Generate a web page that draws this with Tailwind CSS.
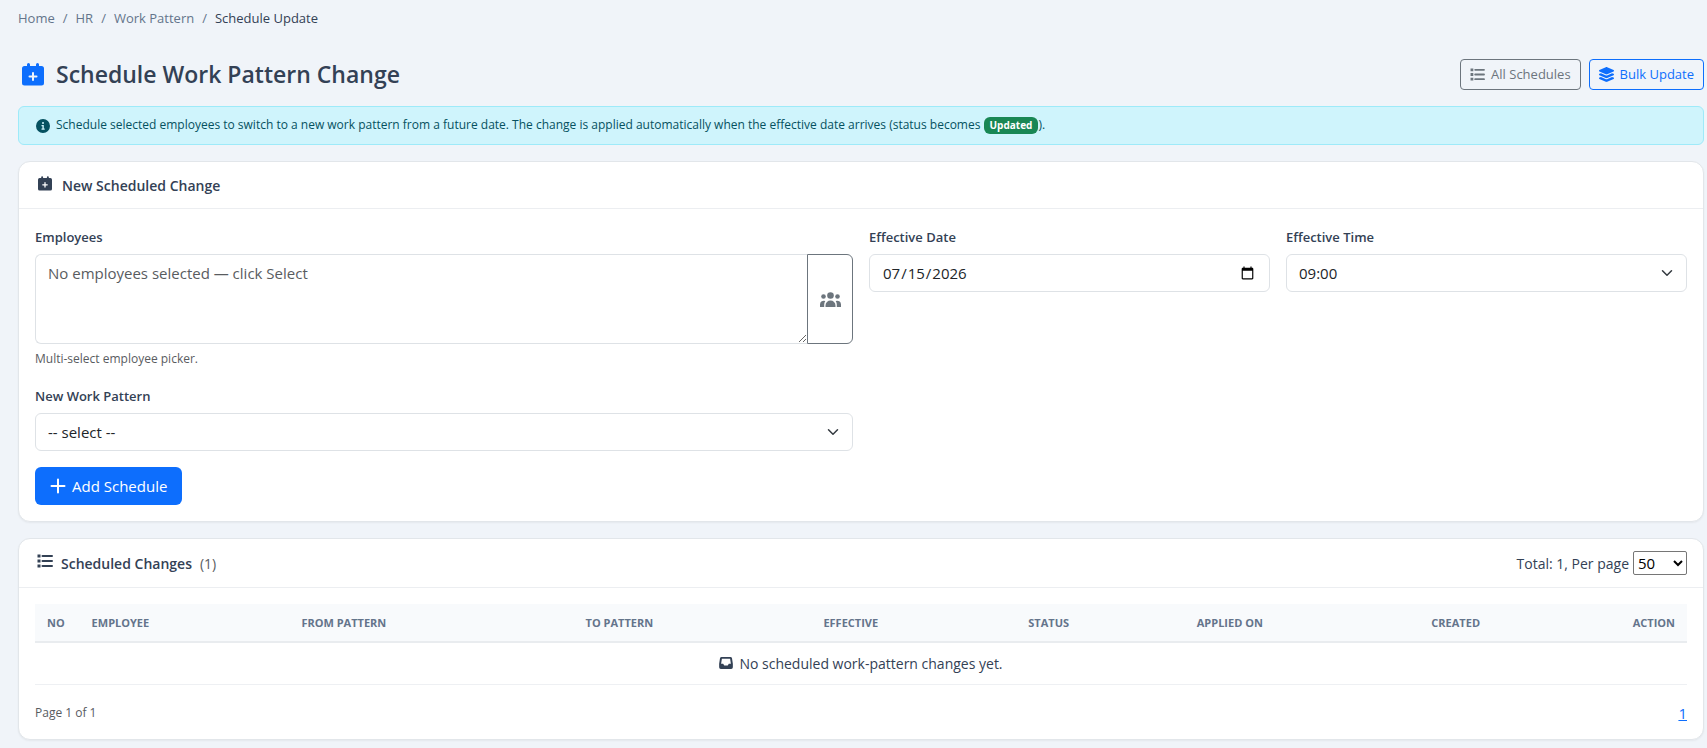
<!DOCTYPE html>
<html lang="en">
<head>
    <meta charset="UTF-8">
    <meta name="viewport" content="width=device-width, initial-scale=1.0">
    <title>Schedule Work Pattern Change</title>
    <script src="https://cdn.jsdelivr.net/npm/@tailwindcss/browser@4"></script>
</head>
<body class="bg-[#f0f4f9] font-['Segoe_UI','Open_Sans',sans-serif] text-[#334155]">
    <!-- Icon sprite -->
    <svg class="hidden" xmlns="http://www.w3.org/2000/svg">
        <symbol id="icon-calendar-plus" viewBox="0 0 22 23">
            <path fill="currentColor" fill-rule="evenodd" d="M6.5 0A1.5 1.5 0 0 1 8 1.5V3h6V1.5a1.5 1.5 0 0 1 3 0V3h2.5A2.5 2.5 0 0 1 22 5.5v14.5a2.5 2.5 0 0 1-2.5 2.5h-17A2.5 2.5 0 0 1 0 20V5.5A2.5 2.5 0 0 1 2.5 3H5V1.5A1.5 1.5 0 0 1 6.5 0zM11 9a1 1 0 0 0-1 1v2.5H7.5a1 1 0 0 0 0 2H10V17a1 1 0 0 0 2 0v-2.5h2.5a1 1 0 0 0 0-2H12V10a1 1 0 0 0-1-1z"/>
        </symbol>
        <symbol id="icon-list" viewBox="0 0 16 14">
            <path fill="currentColor" d="M.5.5h3v3h-3zM.5 5.5h3v3h-3zM.5 10.5h3v3h-3zM5.5 1H15a1 1 0 0 1 0 2H5.5a1 1 0 0 1 0-2zM5.5 6H15a1 1 0 0 1 0 2H5.5a1 1 0 0 1 0-2zM5.5 11H15a1 1 0 0 1 0 2H5.5a1 1 0 0 1 0-2z"/>
        </symbol>
        <symbol id="icon-layers" viewBox="32 0 512 512">
            <path fill="currentColor" d="M264.5 5.2c14.9-6.9 32.1-6.9 47 0l218.6 101c8.5 3.9 13.9 12.4 13.9 21.8s-5.4 17.9-13.9 21.8l-218.6 101c-14.9 6.9-32.1 6.9-47 0L45.9 149.8C37.4 145.8 32 137.3 32 128s5.4-17.9 13.9-21.8L264.5 5.2zM476.9 209.6l53.2 24.6c8.5 3.9 13.9 12.4 13.9 21.8s-5.4 17.9-13.9 21.8l-218.6 101c-14.9 6.9-32.1 6.9-47 0L45.9 277.8C37.4 273.8 32 265.3 32 256s5.4-17.9 13.9-21.8l53.2-24.6 152 70.2c23.4 10.8 50.4 10.8 73.8 0l152-70.2zm-152 198.2l152-70.2 53.2 24.6c8.5 3.9 13.9 12.4 13.9 21.8s-5.4 17.9-13.9 21.8l-218.6 101c-14.9 6.9-32.1 6.9-47 0L45.9 405.8C37.4 401.8 32 393.3 32 384s5.4-17.9 13.9-21.8l53.2-24.6 152 70.2c23.4 10.8 50.4 10.8 73.8 0z"/>
        </symbol>
        <symbol id="icon-info" viewBox="0 0 14 14">
            <path fill="currentColor" fill-rule="evenodd" d="M7 0a7 7 0 1 1 0 14A7 7 0 0 1 7 0zM7 3a1 1 0 1 0 0 2 1 1 0 0 0 0-2zM5.5 6v1.2h.9v2.3h-.9v1.2h3.2V9.5h-.9V6z"/>
        </symbol>
        <symbol id="icon-users" viewBox="0 0 21 15">
            <g fill="currentColor">
                <circle cx="10.5" cy="3.5" r="3.3"/>
                <circle cx="3.5" cy="4.5" r="2.3"/>
                <circle cx="17.5" cy="4.5" r="2.3"/>
                <path d="M5.5 15v-1.5a5 5 0 0 1 10 0V15zM0 15v-2.5A3.8 3.8 0 0 1 5.3 9 6.6 6.6 0 0 0 4.2 13v2zM21 15v-2.5A3.8 3.8 0 0 0 15.7 9a6.6 6.6 0 0 1 1.1 4v2z"/>
            </g>
        </symbol>
        <symbol id="icon-plus" viewBox="0 0 16 16">
            <path d="M8 1.5v13M1.5 8h13" fill="none" stroke="currentColor" stroke-width="2" stroke-linecap="round"/>
        </symbol>
        <symbol id="icon-inbox" viewBox="0 0 16 14">
            <path fill="currentColor" fill-rule="evenodd" d="M3 0h10a2 2 0 0 1 2 1.6L16 8v4a2 2 0 0 1-2 2H2a2 2 0 0 1-2-2V8l1-6.4A2 2 0 0 1 3 0zM3.2 2 2.3 8h2.4l1.3 2h4l1.3-2h2.4l-.9-6z"/>
        </symbol>
        <symbol id="icon-chevron" viewBox="0 0 16 16">
            <path d="m2 5 6 6 6-6" fill="none" stroke="currentColor" stroke-width="2" stroke-linecap="round" stroke-linejoin="round"/>
        </symbol>
    </svg>

    <main class="pl-[18px] pr-[3px] pt-2 pb-2">
        <!-- Breadcrumb -->
        <nav aria-label="Breadcrumb">
            <ol class="flex gap-2 text-[13px] leading-5 text-[#64748b]">
                <li><a href="#">Home</a></li>
                <li>/</li>
                <li><a href="#">HR</a></li>
                <li>/</li>
                <li><a href="#">Work Pattern</a></li>
                <li>/</li>
                <li class="text-[#334155]">Schedule Update</li>
            </ol>
        </nav>

        <!-- Page header -->
        <div class="flex items-center justify-between mt-[30px]">
            <h1 class="flex items-center gap-3 pl-1 text-[23px] leading-8 font-semibold">
                <svg class="w-[22px] h-[23px] text-[#0d6efd]"><use href="#icon-calendar-plus"/></svg>
                Schedule Work Pattern Change
            </h1>
            <div class="flex gap-2 text-[13px] leading-[21px]">
                <a href="#" class="flex items-center gap-1.5 rounded border border-[#6c757d] px-[9px] py-1 text-[#6c757d]">
                    <svg class="w-[15px] h-[13px]"><use href="#icon-list"/></svg>
                    All Schedules
                </a>
                <a href="#" class="flex items-center gap-1.5 rounded border border-[#0d6efd] px-[9px] py-1 text-[#0d6efd]">
                    <svg class="size-[15px]"><use href="#icon-layers"/></svg>
                    Bulk Update
                </a>
            </div>
        </div>

        <!-- Info alert -->
        <div class="flex items-center gap-1.5 mt-4 h-[39px] rounded-md border border-[#9eeaf9] bg-[#cff4fc] px-[17px] text-xs text-[#055160]">
            <svg class="size-[14px] shrink-0"><use href="#icon-info"/></svg>
            <p>Schedule selected employees to switch to a new work pattern from a future date. The change is applied automatically when the effective date arrives (status becomes <span class="inline-block rounded-md bg-[#198754] px-1.5 text-[10px] leading-[17px] font-bold text-white align-middle">Updated</span>).</p>
        </div>

        <!-- New scheduled change -->
        <section class="mt-4 rounded-xl border border-[#e2e6ea] bg-white shadow-xs">
            <h2 class="flex items-center gap-2.5 h-[47px] border-b border-[#eceef1] px-[19px] text-[14px] font-semibold">
                <svg class="w-[14px] h-[15px] mb-1"><use href="#icon-calendar-plus"/></svg>
                New Scheduled Change
            </h2>
            <form class="px-4 pt-[18px] pb-4">
                <div class="grid grid-cols-4 gap-4">
                    <div class="col-span-2">
                        <label for="employees" class="block mb-[7px] text-[13px] leading-5 font-semibold">Employees</label>
                        <div class="flex">
                            <textarea id="employees" readonly placeholder="No employees selected — click Select" class="block grow h-[90px] rounded-l-md border border-r-0 border-[#dee2e6] px-3 py-1.5 text-[15px] leading-6 placeholder:text-[#595c5f]"></textarea>
                            <button type="button" aria-label="Select employees" class="flex w-[46px] items-center justify-center rounded-r-md border border-[#6c757d] text-[#6c757d]">
                                <svg class="w-[21px] h-[15px]"><use href="#icon-users"/></svg>
                            </button>
                        </div>
                        <p class="mt-1 text-xs leading-[22px] text-[#595c5f]">Multi-select employee picker.</p>
                    </div>
                    <div>
                        <label for="effective-date" class="block mb-[7px] text-[13px] leading-5 font-semibold">Effective Date</label>
                        <input type="date" id="effective-date" value="2026-07-15" class="block w-full h-[38px] rounded-md border border-[#dee2e6] px-3 text-[15px] text-[#212529]">
                    </div>
                    <div>
                        <label for="effective-time" class="block mb-[7px] text-[13px] leading-5 font-semibold">Effective Time</label>
                        <div class="relative">
                            <select id="effective-time" class="block w-full h-[38px] appearance-none rounded-md border border-[#dee2e6] px-3 text-[15px] text-[#212529]">
                                <option>09:00</option>
                            </select>
                            <svg class="pointer-events-none absolute right-3 top-[13px] w-4 h-3 text-[#343a40]"><use href="#icon-chevron"/></svg>
                        </div>
                    </div>
                    <div class="col-span-2">
                        <label for="work-pattern" class="block mb-[7px] text-[13px] leading-5 font-semibold">New Work Pattern</label>
                        <div class="relative">
                            <select id="work-pattern" class="block w-full h-[38px] appearance-none rounded-md border border-[#dee2e6] px-3 text-[15px] text-[#212529]">
                                <option>-- select --</option>
                            </select>
                            <svg class="pointer-events-none absolute right-3 top-[13px] w-4 h-3 text-[#343a40]"><use href="#icon-chevron"/></svg>
                        </div>
                    </div>
                </div>
                <button type="button" class="flex items-center gap-1.5 mt-4 h-[38px] rounded-md bg-[#0d6efd] px-[15px] text-[15px] text-white">
                    <svg class="size-4"><use href="#icon-plus"/></svg>
                    Add Schedule
                </button>
            </form>
        </section>

        <!-- Scheduled changes -->
        <section class="mt-4 rounded-xl border border-[#e2e6ea] bg-white shadow-xs">
            <div class="flex items-center justify-between h-[49px] border-b border-[#eceef1] pl-[18px] pr-4">
                <h2 class="flex items-center gap-2 text-[14px] font-semibold">
                    <svg class="w-4 h-[14px] mb-1"><use href="#icon-list"/></svg>
                    Scheduled Changes
                    <span class="font-normal text-[#595c5f]">(1)</span>
                </h2>
                <div class="flex items-center gap-1">
                    <label for="per-page" class="text-[14px] font-medium">Total: 1, Per page</label>
                    <select id="per-page" class="w-[54px] h-6 rounded-xs border border-[#767676] bg-white text-[15px] text-black">
                        <option>50</option>
                    </select>
                </div>
            </div>
            <div class="p-4">
                <table class="w-full table-fixed">
                    <thead class="border-b-2 border-[#e9ecef] bg-[#f8fafc] text-left text-[11px] leading-4 text-[#64748b]">
                        <tr class="h-[38px]">
                            <th class="w-[2.7%] pl-3">NO</th>
                            <th class="w-[12.7%] pl-3">EMPLOYEE</th>
                            <th class="w-[17.2%] pl-3">FROM PATTERN</th>
                            <th class="w-[14.4%] pl-3">TO PATTERN</th>
                            <th class="w-[12.4%] pl-3">EFFECTIVE</th>
                            <th class="w-[10.2%] pl-3">STATUS</th>
                            <th class="w-[14.2%] pl-3">APPLIED ON</th>
                            <th class="pl-3">CREATED</th>
                            <th class="w-[6%] pr-3 text-right">ACTION</th>
                        </tr>
                    </thead>
                    <tbody>
                        <tr class="h-[42px] border-b border-[#eef0f3]">
                            <td colspan="9" class="text-[14px]">
                                <div class="flex items-center justify-center gap-1.5">
                                    <svg class="w-[14px] h-3"><use href="#icon-inbox"/></svg>
                                    No scheduled work-pattern changes yet.
                                </div>
                            </td>
                        </tr>
                    </tbody>
                </table>
                <div class="flex items-center justify-between mt-[18px] leading-5">
                    <span class="text-xs leading-5 text-[#595c5f]">Page 1 of 1</span>
                    <a href="#" class="text-[15px] leading-5 text-[#0d6efd] underline">1</a>
                </div>
            </div>
        </section>
    </main>
</body>
</html>
